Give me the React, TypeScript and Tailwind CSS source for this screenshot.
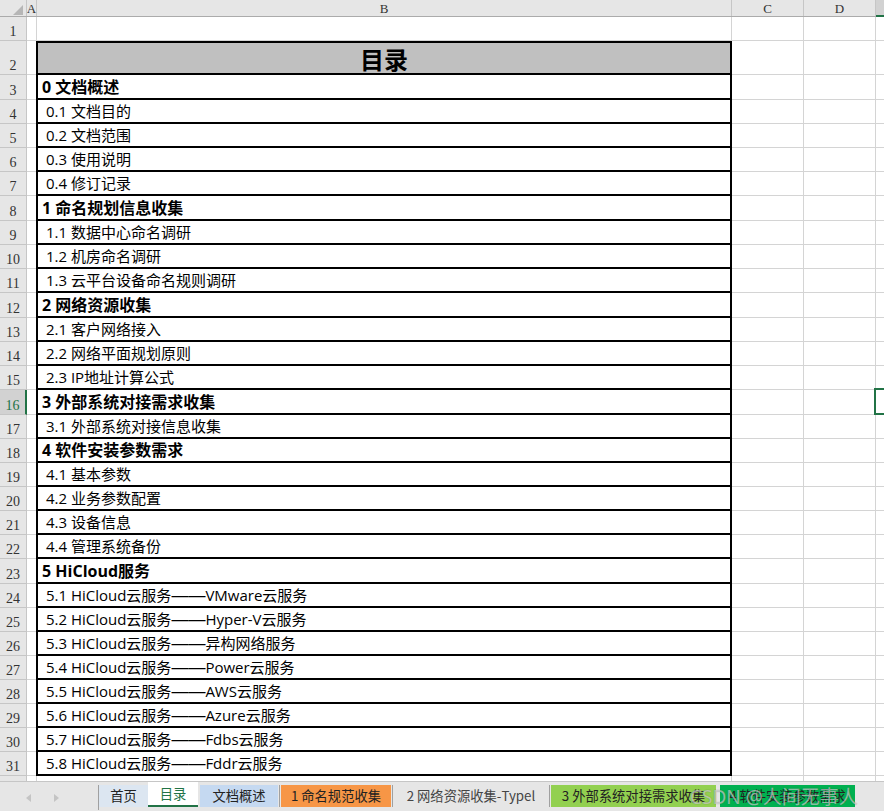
import React from 'react';

interface TocRow {
  n: number;
  text: string;
  bold?: boolean;
}

const rows: TocRow[] = [
  { n: 3, text: '0 文档概述', bold: true },
  { n: 4, text: ' 0.1 文档目的' },
  { n: 5, text: ' 0.2 文档范围' },
  { n: 6, text: ' 0.3 使用说明' },
  { n: 7, text: ' 0.4 修订记录' },
  { n: 8, text: '1 命名规划信息收集', bold: true },
  { n: 9, text: ' 1.1 数据中心命名调研' },
  { n: 10, text: ' 1.2 机房命名调研' },
  { n: 11, text: ' 1.3 云平台设备命名规则调研' },
  { n: 12, text: '2 网络资源收集', bold: true },
  { n: 13, text: ' 2.1 客户网络接入' },
  { n: 14, text: ' 2.2 网络平面规划原则' },
  { n: 15, text: ' 2.3 IP地址计算公式' },
  { n: 16, text: '3 外部系统对接需求收集', bold: true },
  { n: 17, text: ' 3.1 外部系统对接信息收集' },
  { n: 18, text: '4 软件安装参数需求', bold: true },
  { n: 19, text: ' 4.1 基本参数' },
  { n: 20, text: ' 4.2 业务参数配置' },
  { n: 21, text: ' 4.3 设备信息' },
  { n: 22, text: ' 4.4 管理系统备份' },
  { n: 23, text: '5 HiCloud服务', bold: true },
  { n: 24, text: ' 5.1 HiCloud云服务——VMware云服务' },
  { n: 25, text: ' 5.2 HiCloud云服务——Hyper-V云服务' },
  { n: 26, text: ' 5.3 HiCloud云服务——异构网络服务' },
  { n: 27, text: ' 5.4 HiCloud云服务——Power云服务' },
  { n: 28, text: ' 5.5 HiCloud云服务——AWS云服务' },
  { n: 29, text: ' 5.6 HiCloud云服务——Azure云服务' },
  { n: 30, text: ' 5.7 HiCloud云服务——Fdbs云服务' },
  { n: 31, text: ' 5.8 HiCloud云服务——Fddr云服务' },
];

const cellFont = { fontFamily: '"Open Sans", "Noto Sans CJK SC", sans-serif' };
const headFont = { fontFamily: '"Liberation Serif", "Noto Sans CJK SC", serif' };

// the long dash reads as one unbroken rule in the sheet; Arial-metric em dash fills its advance
const renderText = (text: string) => {
  const parts = text.split('——');
  if (parts.length === 1) return text;
  return (
    <>
      {parts[0]}
      <span className="font-['Liberation_Sans'] text-[17px]">——</span>
      {parts[1]}
    </>
  );
};

const RowHeader: React.FC<{ n: number; active?: boolean }> = ({ n, active }) => (
  <div
    style={headFont}
    className={
      active
        ? 'w-[27px] shrink-0 flex items-end justify-center pb-[1px] text-[14px] leading-none bg-[#d2d2d2] text-[#217346] border-b border-[#c6c6c6] border-r-2 border-r-[#217346]'
        : 'w-[27px] shrink-0 flex items-end justify-center pb-[1px] text-[14px] leading-none bg-[#e6e6e6] text-[#333] border-b border-r border-[#c6c6c6]'
    }
  >
    {n}
  </div>
);

const Blank: React.FC<{ w: string }> = ({ w }) => (
  <div className={`${w} shrink-0 border-b border-r border-[#d4d4d4]`} />
);

const App: React.FC = () => {
  return (
    <div className="w-[884px] h-[811px] overflow-hidden bg-white flex flex-col relative" style={cellFont}>
      {/* column header */}
      <div className="flex h-[17px] shrink-0 bg-[#e6e6e6] border-b border-[#ababab] text-[#333]" style={headFont}>
        <div className="w-[27px] shrink-0 border-r border-[#c6c6c6] relative">
          <svg width="27" height="16" className="absolute left-0 top-0">
            <polygon points="23,5 23,15 13,15" fill="#b6b6b6" />
          </svg>
        </div>
        <div className="w-[10px] shrink-0 border-r border-[#c6c6c6] flex items-center justify-center text-[13px] leading-none">A</div>
        <div className="w-[695px] shrink-0 border-r border-[#c6c6c6] flex items-center justify-center text-[13px] leading-none">B</div>
        <div className="w-[72px] shrink-0 border-r border-[#c6c6c6] flex items-center justify-center text-[13px] leading-none">C</div>
        <div className="w-[72px] shrink-0 border-r border-[#c6c6c6] flex items-center justify-center text-[13px] leading-none">D</div>
        <div className="flex-1 bg-[#d2d2d2] border-b-2 border-[#217346] -mb-px" />
      </div>

      {/* grid body */}
      <div className="flex-1 overflow-hidden flex flex-col">
        {/* row 1 */}
        <div className="flex h-[24px] shrink-0">
          <RowHeader n={1} />
          <Blank w="w-[10px]" />
          <Blank w="w-[695px]" />
          <Blank w="w-[72px]" />
          <Blank w="w-[72px]" />
          <div className="flex-1 border-b border-[#d4d4d4]" />
        </div>
        {/* row 2: title */}
        <div className="flex h-[34px] shrink-0">
          <RowHeader n={2} />
          <div className="w-[9px] shrink-0 border-b border-[#d4d4d4]" />
          <div
            className="w-[696px] shrink-0 bg-[#c0c0c0] border-2 border-black flex items-center justify-center text-[24px] font-bold text-black leading-none pt-[2px]"
            style={{ fontFamily: '"Noto Sans CJK SC", sans-serif' }}
          >
            目录
          </div>
          <Blank w="w-[72px]" />
          <Blank w="w-[72px]" />
          <div className="flex-1 border-b border-[#d4d4d4]" />
        </div>
        {rows.map((r) => (
          <div key={r.n} className={`flex shrink-0 ${r.bold && r.n !== 18 ? 'h-[25px]' : 'h-[24px]'}`}>
            <RowHeader n={r.n} active={r.n === 16} />
            <div className="w-[9px] shrink-0 border-b border-[#d4d4d4]" />
            <div
              className={`w-[696px] shrink-0 border-x-2 border-b-2 border-black flex items-center pl-[4px] text-black whitespace-pre leading-none ${
                r.bold ? 'text-[16px] font-bold' : 'text-[15px]'
              }`}
            >
              {renderText(r.text)}
            </div>
            <Blank w="w-[72px]" />
            <Blank w="w-[72px]" />
            <div className="flex-1 relative border-b border-[#d4d4d4]">
              {r.n === 16 && <div className="absolute left-[-2px] top-[-2px] w-[20px] h-[27px] border-2 border-[#217346]" />}
            </div>
          </div>
        ))}
        {/* row 32 (cut off) */}
        <div className="flex h-[24px] shrink-0">
          <RowHeader n={32} />
          <Blank w="w-[10px]" />
          <Blank w="w-[695px]" />
          <Blank w="w-[72px]" />
          <Blank w="w-[72px]" />
          <div className="flex-1 border-b border-[#d4d4d4]" />
        </div>
      </div>

      {/* sheet tabs */}
      <div
        className="h-[30px] shrink-0 bg-[#e6e6e6] border-t border-[#c6c6c6] flex items-start text-[13.3px] text-[#222] whitespace-nowrap"
        style={{ fontFamily: '"Noto Sans CJK SC", sans-serif' }}
      >
        <div className="w-[99px] h-[25px] shrink-0 flex items-center border-r border-[#a0a0a0] mt-[3px]">
          <svg width="8" height="10" className="ml-[24px]">
            <polygon points="7,1 7,9 2,5" fill="#c4c4c4" />
          </svg>
          <svg width="8" height="10" className="ml-[21px]">
            <polygon points="1,1 1,9 6,5" fill="#c4c4c4" />
          </svg>
        </div>
        <div className="w-[49px] h-[22px] mt-[3px] shrink-0 bg-[#dce6f1] flex items-center justify-center">首页</div>
        <div className="w-[50px] h-[25px] shrink-0 bg-white border-b-2 border-[#217346] flex items-center justify-center text-[#217346]">目录</div>
        <div className="w-[2px] shrink-0" />
        <div className="w-[78px] h-[22px] mt-[3px] shrink-0 bg-[#c5d9f1] flex items-center justify-center">文档概述</div>
        <div className="w-px h-[22px] mt-[3px] shrink-0 bg-[#a0a0a0] mx-[1px]" />
        <div className="w-[110px] h-[22px] mt-[3px] shrink-0 bg-[#f79646] flex items-center justify-center">1 命名规范收集</div>
        <div className="w-px h-[22px] mt-[3px] shrink-0 bg-[#a0a0a0] mx-[1px]" />
        <div className="w-[154px] h-[22px] mt-[3px] shrink-0 flex items-center justify-center text-[#444]">2 网络资源收集-Typel</div>
        <div className="w-px h-[22px] mt-[3px] shrink-0 bg-[#a0a0a0] mx-[1px]" />
        <div className="w-[165px] h-[22px] mt-[3px] shrink-0 bg-[#92d050] flex items-center justify-center">3 外部系统对接需求收集</div>
        <div className="w-[4px] shrink-0" />
        <div className="w-[135px] h-[22px] mt-[3px] shrink-0 bg-[#00b050] flex items-center justify-center">4 软件安装参数需求</div>
        <div
          className="absolute left-[690px] bottom-[1px] text-[19px] leading-[26px] text-white/55 [text-shadow:0_0_1px_rgba(0,0,0,0.45)] pointer-events-none"
          style={{ fontFamily: '"Noto Sans", "Noto Sans CJK SC", sans-serif' }}
        >
          CSDN @人间无事人
        </div>
      </div>
    </div>
  );
};

export default App;
